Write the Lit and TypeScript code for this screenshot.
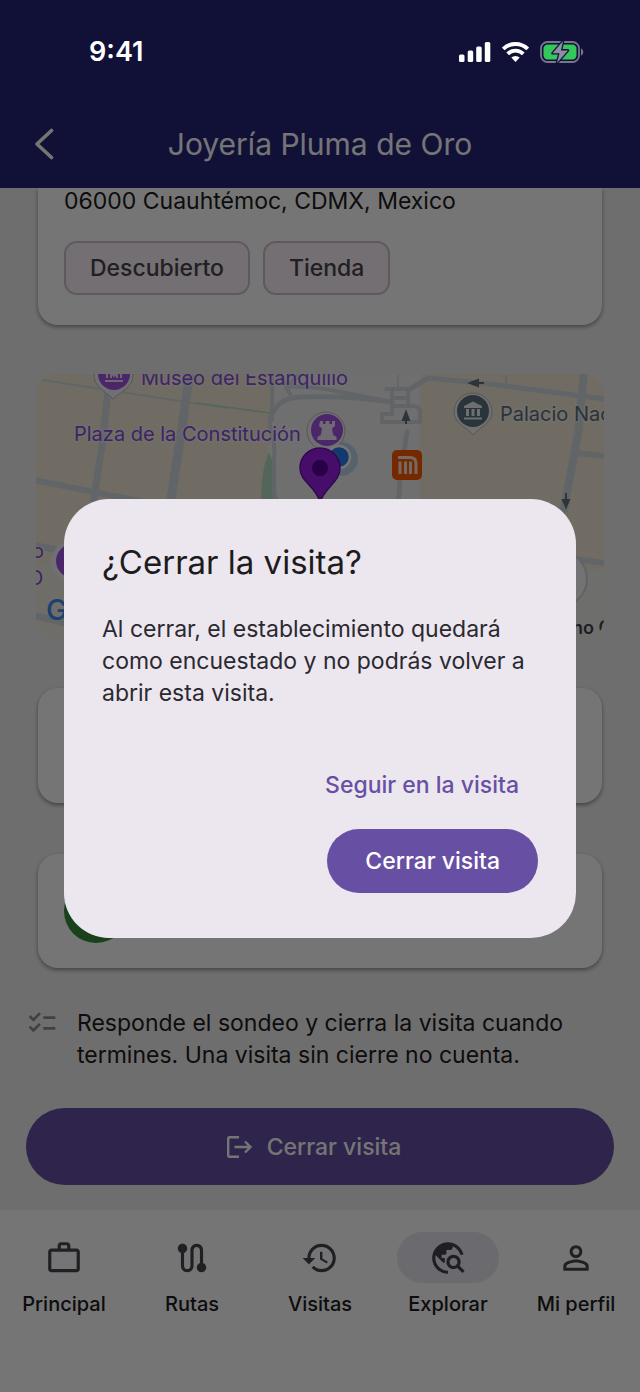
import { LitElement, html, css, svg } from "lit";
import { customElement, property } from "lit/decorators.js";

const ICONS = {
  work: "M14 6V4h-4v2h4zM4 8v11h16V8H4zm16-2c1.11 0 2 .89 2 2v11c0 1.11-.89 2-2 2H4c-1.11 0-2-.89-2-2l.01-11c0-1.11.88-2 1.99-2h4V4c0-1.11.89-2 2-2h4c1.11 0 2 .89 2 2v2h4z",
  route: "M19,15.18V7c0-2.21-1.79-4-4-4s-4,1.79-4,4v10c0,1.1-0.9,2-2,2s-2-0.9-2-2V8.82C8.16,8.4,9,7.3,9,6c0-1.66-1.34-3-3-3S3,4.34,3,6c0,1.3,0.84,2.4,2,2.82V17c0,2.21,1.79,4,4,4s4-1.79,4-4V7c0-1.1,0.9-2,2-2s2,0.9,2,2v8.18c-1.16,0.41-2,1.51-2,2.82c0,1.66,1.34,3,3,3s3-1.34,3-3C21,16.7,20.16,15.6,19,15.18z",
  history: "M13 3c-4.97 0-9 4.03-9 9H1l3.89 3.89.07.14L9 12H6c0-3.87 3.13-7 7-7s7 3.13 7 7-3.13 7-7 7c-1.93 0-3.68-.79-4.94-2.06l-1.42 1.42C8.27 19.99 10.51 21 13 21c4.97 0 9-4.03 9-9s-4.03-9-9-9zm-1 5v5l4.28 2.54.72-1.21-3.5-2.08V8H12z",
  explore: "M19.3,16.9c0.4-0.7,0.7-1.5,0.7-2.4c0-2.5-2-4.5-4.5-4.5S11,12,11,14.5s2,4.5,4.5,4.5c0.9,0,1.7-0.3,2.4-0.7l3.2,3.2l1.4-1.4L19.3,16.9z M15.5,17c-1.4,0-2.5-1.1-2.5-2.5s1.1-2.5,2.5-2.5s2.5,1.1,2.5,2.5S16.9,17,15.5,17z M12,20v2C6.48,22,2,17.52,2,12C2,6.48,6.48,2,12,2c4.84,0,8.87,3.44,9.8,8h-2.07c-0.64-2.46-2.4-4.47-4.73-5.41V5c0,1.1-0.9,2-2,2h-2v2c0,0.55-0.45,1-1,1H8v2h2v3H9l-4.79-4.79C4.08,10.79,4,11.38,4,12C4,16.41,7.59,20,12,20z",
  person: "M12 5.9c1.16 0 2.1.94 2.1 2.1s-.94 2.1-2.1 2.1S9.9 9.16 9.9 8s.94-2.1 2.1-2.1m0 9c2.97 0 6.1 1.46 6.1 2.1v1.1H5.9V17c0-.64 3.13-2.1 6.1-2.1M12 4C9.79 4 8 5.79 8 8s1.79 4 4 4 4-1.79 4-4-1.79-4-4-4zm0 9c-2.67 0-8 1.34-8 4v3h16v-3c0-2.66-5.33-4-8-4z",
  checklist: "M22 7h-9v2h9V7zm0 8h-9v2h9v-2zM5.54 11L2 7.46l1.41-1.41 2.12 2.12 4.24-4.24 1.41 1.41L5.54 11zm0 8L2 15.46l1.41-1.41 2.12 2.12 4.24-4.24 1.41 1.41L5.54 19z",
};

@customElement("status-bar")
export class StatusBar extends LitElement {
  static styles = css`
    :host { display: flex; align-items: center; justify-content: space-between; height: 104px; padding: 0 56px 0 89px; color: #fff; }
    .time { font: 600 27px/32px Inter, "Liberation Sans", sans-serif; }
    .signals { display: flex; align-items: center; gap: 11px; }
    svg { display: block; }
  `;
  render() {
    return html`
      <span class="time">9:41</span>
      <div class="signals">
        <svg width="32" height="20" viewBox="0 0 32 20" fill="#fff" aria-label="Señal">
          <rect x="0" y="12.5" width="5.5" height="7.5" rx="1.6" />
          <rect x="8.7" y="8.5" width="5.5" height="11.5" rx="1.6" />
          <rect x="17.2" y="4.5" width="5.5" height="15.5" rx="1.6" />
          <rect x="25.8" y="0" width="5.5" height="20" rx="1.6" />
        </svg>
        <svg width="27" height="20" viewBox="0 0 27 20" fill="none" stroke="#fff" stroke-width="3.8" aria-label="Wi-Fi">
          <path d="M1.3 7a17.4 17.4 0 0 1 24.4 0" />
          <path d="M5.7 11.8a11 11 0 0 1 15.6 0" />
          <path d="M13.5 20l-4.2-4.4a6 6 0 0 1 8.4 0z" fill="#fff" stroke="none" />
        </svg>
        <svg width="44" height="22" viewBox="0 0 44 22" aria-label="Batería cargando">
          <rect x="1" y="1" width="38" height="20" rx="6.5" fill="none" stroke="#77758f" stroke-width="1.8" />
          <path d="M41 7.5c3 1 3 6 0 7z" fill="#77758f" />
          <rect x="3.5" y="3.5" width="33" height="15" rx="4.2" fill="#34c759" />
          <path d="M23 0L12.5 12.3h7L17 22l11-12.6h-7z" fill="#8f8da6" stroke="#121138" stroke-width="2.6" paint-order="stroke" stroke-linejoin="round" />
        </svg>
      </div>
    `;
  }
}

@customElement("visit-map")
export class VisitMap extends LitElement {
  static styles = css`
    :host { display: block; height: 265px; border-radius: 20px; overflow: hidden; background: #f3ecd8; }
    svg { display: block; width: 100%; height: 100%; }
    text { font-family: Inter, "Liberation Sans", sans-serif; }
    .poi { font-size: 20px; font-weight: 400; fill: #8a4be0; stroke: #fff; stroke-opacity: 0.35; stroke-width: 3; paint-order: stroke; }
    .civic { fill: #5c7080; }
    .street { font-size: 18px; font-weight: 600; fill: #3c4650; }
    .logo { font-size: 29px; font-weight: 500; fill: #3e8df5; }
  `;
  // The drawing uses the map's own 568 x 265 canvas.
  render() {
    return html`
      <svg viewBox="0 0 568 265" preserveAspectRatio="xMidYMid slice" role="img" aria-label="Mapa">
        <rect width="568" height="265" fill="#f3ecd8" />
        <path d="M240 0H384V135H300V265H228V120L234 60z" fill="#f2f2f5" />
        <path d="M500 190L568 196V265H500z" fill="#f0f0ee" />
        <path d="M0 190H60V265H0z" fill="#efede0" />
        <path d="M233 78c7 16 7 32 4 42l12 15h-24c0-25 1-40 8-57z" fill="#b5dfc3" />
        <g fill="none" stroke="#d3dde3" stroke-linecap="round" stroke-linejoin="round">
          <path d="M0 5L150 28L190 34" stroke-width="2" />
          <path d="M160 29L234 39" stroke-width="1.600" stroke="#b7e0c0" />
          <path d="M72 18L66 72L54 150" stroke-width="7" />
          <path d="M154 -2L145 60L133 138" stroke-width="9" />
          <path d="M-2 106L68 120L140 134" stroke-width="6" />
          <path d="M236 0V46M234 50c2 14 6 20 4 34V118c2 10 6 12 14 14" stroke-width="4" />
          <path d="M234 46c4-14 12-22 30-23c30-1 60 0 92 5" stroke-width="5" />
          <path d="M244 0L254 20M252 12L284 14L356 28M250 14L262 2" stroke-width="4" />
          <path d="M350 15H374M356 15V40H346V48H384V38c0-5-3-6-8-6H356M372 15V31M356 24H370" stroke-width="4" />
          <path d="M362 0V14" stroke-width="1.500" />
          <path d="M374 15L392 4L454 10L568 25" stroke-width="5" />
          <path d="M470 2V12" stroke-width="2" />
          <path d="M371 58L368 78M364 108L362 135" stroke-width="5" />
          <path d="M548 -2L542 60L528 135" stroke-width="8" />
          <path d="M540 79L568 82" stroke-width="6" />
          <path d="M520 182L568 189" stroke-width="6" />
          <path d="M0 172L30 177M0 242L34 250" stroke-width="7" />
        </g>
        <g fill="#66727e" stroke="#66727e" stroke-width="2">
          <path d="M434 9L442 6V12zM441 9H448" />
          <path d="M370 38L367 46H373zM370 44V50" />
          <path d="M530 133L527 126H533zM530 128V119" />
        </g>

        <path d="M77 25c-8-8-19-12-19-24V-10H97V1c0 12-11 16-20 24z" fill="#f5f2f7" stroke="#bbb" stroke-width="1" />
        <circle cx="78" cy="0" r="16" fill="#a355e6" />
        <path d="M69 7H87M71 4V-3M85 4V-3M75 4V-2L78 2L81 -2V4" fill="none" stroke="#efe2fa" stroke-width="2" />
        <text class="poi" x="105" y="11">Museo del Estanquillo</text>
        <text class="poi" x="38" y="67">Plaza de la Constitución</text>

        <circle cx="305" cy="85" r="17" fill="#b4cdea" fill-opacity="0.8" />
        <circle cx="290" cy="57" r="19" fill="#f5f2f7" stroke="#bbb" stroke-width="1" />
        <circle cx="291" cy="56" r="16" fill="#a355e6" />
        <path d="M284 47h3v3h2.500v-3h4v3h2.500v-3h3v5l-3 2.500l1.200 6.500l3.300 2v3h-19v-3l3.300-2l1.200-6.500l-3-2.500z" fill="#f2e6fb" />
        <circle cx="303" cy="83" r="11" fill="#2a7df0" stroke="#fff" stroke-width="2.500" />
        <path d="M284 128c-4-16-20-20-20-34a20 20 0 0 1 40 0c0 14-14 18-20 34z" fill="#9a1ee8" stroke="#6c12a8" stroke-width="1.500" />
        <circle cx="284" cy="94" r="8" fill="#570098" />

        <rect x="356" y="76" width="30" height="30" rx="5" fill="#ff5a00" />
        <path d="M362 83.500H374c4 0 6 2 6 6V100M364 100V87.500M369.500 100V87.500M374.500 100V87.500" fill="none" stroke="#ffe8d8" stroke-width="3" />

        <path d="M437 61c-7-8-19-12-19-23a19 19 0 0 1 38 0c0 11-12 15-19 23z" fill="#f4f5f6" stroke="#bbb" stroke-width="1" />
        <circle cx="437" cy="37" r="16" fill="#5b7382" />
        <path d="M428 34V32l9-4.500 9 4.500v2zM430 35h3v7h-3zM435.500 35h3v7h-3zM441 35h3v7h-3zM428 43.500h18v2h-18z" fill="#eef2f4" />
        <text class="poi civic" x="464" y="47">Palacio Nacional</text>

        <text class="poi" x="-4" y="184">o</text>
        <text class="poi" x="-8" y="211">O</text>
        <circle cx="36" cy="188" r="21" fill="#f5f2f7" />
        <circle cx="37" cy="187" r="17" fill="#a355e6" />
        <text class="logo" x="10" y="246">G</text>
        <circle cx="523" cy="205" r="28" fill="#fafafa" stroke="#d6d6d6" stroke-width="2" />
        <text class="street" x="536" y="260">no Ce</text>
      </svg>
    `;
  }
}

@customElement("tab-bar")
export class TabBar extends LitElement {
  @property() active = "Explorar";
  static styles = css`
    :host { display: block; background: #fff; height: 182px; }
    .tabs { display: grid; grid-template-columns: repeat(5, 1fr); padding-top: 22px; }
    .tab { display: flex; flex-direction: column; align-items: center; gap: 9px; text-decoration: none; color: #1d1b20; font: 500 20px/24px Inter, "Liberation Sans", sans-serif; white-space: nowrap; }
    .pill { display: grid; place-items: center; width: 102px; height: 51px; border-radius: 26px; color: #49454f; }
    .tab.on .pill { background: #e8e6f2; color: #46434e; }
    svg { display: block; width: 38px; height: 38px; fill: currentColor; }
  `;
  render() {
    const tabs = [
      ["Principal", ICONS.work],
      ["Rutas", ICONS.route],
      ["Visitas", ICONS.history],
      ["Explorar", ICONS.explore],
      ["Mi perfil", ICONS.person],
    ];
    return html`<nav class="tabs">
      ${tabs.map(
        ([label, d]) => html`<a class="tab ${label === this.active ? "on" : ""}" href="#">
          <span class="pill"><svg viewBox="0 0 24 24" aria-hidden="true">${svg`<path d=${d} />`}</svg></span>
          <span>${label}</span>
        </a>`
      )}
    </nav>`;
  }
}

@customElement("close-dialog")
export class CloseDialog extends LitElement {
  static styles = css`
    :host { display: block; box-sizing: border-box; background: #ece6ee; border-radius: 45px; padding: 38px 38px 45px; color: #1d1b20; font-family: Inter, "Liberation Sans", sans-serif; }
    h2 { margin: 0; font-weight: 400; font-size: 33px; line-height: 51px; }
    p { margin: 25px 0 0; font-size: 23px; line-height: 32px; color: #2b2930; }
    .actions { display: flex; flex-direction: column; align-items: flex-end; gap: 12px; margin-top: 44px; }
    button { border: 0; font: 500 23px/32px Inter, "Liberation Sans", sans-serif; height: 64px; border-radius: 32px; cursor: pointer; }
    .text { background: none; color: #6750a4; padding: 0 19px; }
    .filled { background: #6750a4; color: #fff; padding: 0 38px; }
  `;
  render() {
    return html`
      <h2>¿Cerrar la visita?</h2>
      <p>Al cerrar, el establecimiento quedará como encuestado y no podrás volver a abrir esta visita.</p>
      <div class="actions">
        <button class="text" type="button">Seguir en la visita</button>
        <button class="filled" type="button">Cerrar visita</button>
      </div>
    `;
  }
}

@customElement("app-root")
export class AppRoot extends LitElement {
  static styles = css`
    :host { display: flex; flex-direction: column; position: relative; min-height: 100vh; background: #f0f0f0; color: #1d1b20; font-family: Inter, "Liberation Sans", sans-serif; }
    .top { background: #27257a; }
    .top status-bar { visibility: hidden; }
    .bar { display: grid; grid-template-columns: 64px 1fr 64px; align-items: center; height: 84px; padding: 0 12px 4px; box-sizing: border-box; color: #fff; }
    .bar h1 { margin: 0; text-align: center; font-weight: 400; font-size: 30px; line-height: 44px; white-space: nowrap; }
    .back { display: grid; place-items: center; width: 64px; height: 64px; padding: 0; border: 0; background: none; color: inherit; }
    main { flex: 1; display: flex; flex-direction: column; }
    .card { margin: 0 38px; background: #fff; border-radius: 20px; box-shadow: 0 2px 4px rgba(0, 0, 0, 0.4); box-sizing: border-box; }
    .address { border-radius: 0 0 20px 20px; padding: 0 26px 30px; }
    .address p { margin: 0; font-size: 23px; line-height: 26px; }
    .chips { display: flex; gap: 13px; margin-top: 27px; }
    .chip { box-sizing: border-box; height: 54px; padding: 0 24px; border: 2px solid #cac4d0; border-radius: 13px; background: #fbf1f8; color: #49454f; font-weight: 500; font-size: 23px; line-height: 50px; }
    visit-map { margin: 49px 36px; }
    .empty { height: 115px; }
    .survey { display: flex; align-items: center; height: 114px; margin-top: 51px; padding: 0 26px; }
    .badge { width: 64px; height: 64px; border-radius: 50%; background: #388e3c; }
    .hint { display: flex; gap: 19px; margin: 39px 26px 0; }
    .hint svg { flex: none; width: 32px; height: 32px; fill: #8c8c8c; }
    .hint p { margin: 0; font-size: 23px; line-height: 32px; }
    .close { display: flex; align-items: center; justify-content: center; gap: 15px; height: 77px; margin: 37px 26px 25px; padding: 0 13px 0 0; border: 0; border-radius: 39px; background: #6750a4; color: #fff; font: 500 23px/32px Inter, "Liberation Sans", sans-serif; }
    .overlay { position: absolute; inset: 0; display: flex; flex-direction: column; background: rgba(0, 0, 0, 0.54); }
    .center { flex: 1; display: grid; align-items: center; padding: 0 64px 59px; }
  `;
  render() {
    return html`
      <header class="top">
        <status-bar aria-hidden="true"></status-bar>
        <div class="bar">
          <button class="back" type="button" aria-label="Atrás">
            <svg width="20" height="32" viewBox="0 0 20 32" fill="none" stroke="currentColor" stroke-width="3.6" stroke-linecap="round" stroke-linejoin="round"><path d="M17.500 2.500L3 16L17.500 29.500" /></svg>
          </button>
          <h1>Joyería Pluma de Oro</h1>
        </div>
      </header>
      <main>
        <section class="card address">
          <p>06000 Cuauhtémoc, CDMX, Mexico</p>
          <div class="chips"><span class="chip">Descubierto</span><span class="chip">Tienda</span></div>
        </section>
        <visit-map></visit-map>
        <section class="card empty"></section>
        <section class="card survey"><i class="badge"></i></section>
        <div class="hint">
          <svg viewBox="0 0 24 24" aria-hidden="true"><path d=${ICONS.checklist} /></svg>
          <p>Responde el sondeo y cierra la visita cuando termines. Una visita sin cierre no cuenta.</p>
        </div>
        <button class="close" type="button">
          <svg width="26" height="24" viewBox="0 0 26 24" fill="none" stroke="currentColor" stroke-width="2.400" aria-hidden="true">
            <path d="M13 2.200H3.500a1.300 1.300 0 0 0-1.300 1.300V20.500a1.300 1.300 0 0 0 1.300 1.300H13M8.500 12H24M19 6.500L24.500 12L19 17.500" />
          </svg>
          Cerrar visita
        </button>
      </main>
      <tab-bar></tab-bar>
      <div class="overlay">
        <status-bar></status-bar>
        <div class="center"><close-dialog role="dialog" aria-modal="true" aria-label="¿Cerrar la visita?"></close-dialog></div>
      </div>
    `;
  }
}
